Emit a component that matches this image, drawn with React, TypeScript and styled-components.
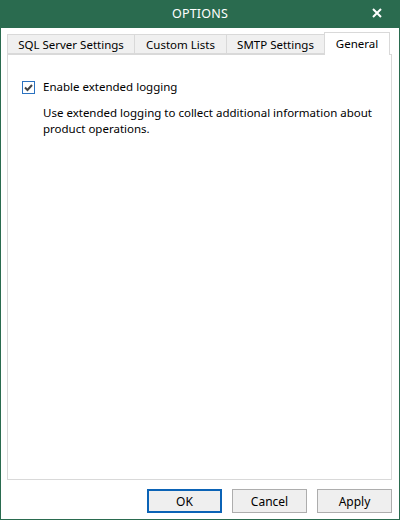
import React from "react";
import styled, { createGlobalStyle } from "styled-components";

const GREEN = "#2a6b4f";

const GlobalStyle = createGlobalStyle`
  html, body {
    margin: 0;
    padding: 0;
    background: #ffffff;
  }
  body {
    font-family: "Noto Sans", "Open Sans", "Liberation Sans", sans-serif;
    font-size: 11px;
    color: #1a1a1a;
  }
  * {
    box-sizing: border-box;
  }
`;

// tab label + width in px, as the tabs are drawn in the dialog
const tabs = [
  { label: "SQL Server Settings", width: 128 },
  { label: "Custom Lists", width: 93 },
  { label: "SMTP Settings", width: 99 },
  { label: "General", width: 66 },
];

export default function App(): JSX.Element {
  const active = 3;
  return (
    <>
      <GlobalStyle />
      <Window>
        <TitleBar>
          <span />
          <Title>OPTIONS</Title>
          <CloseButton aria-label="close">
            <svg width="10" height="10" viewBox="0 0 10 10">
              <path d="M1 1 L9 9 M9 1 L1 9" stroke="#fff" strokeWidth="2" />
            </svg>
          </CloseButton>
        </TitleBar>
        <Body>
          <TabStrip>
            {tabs.map((t, i) => (
              <Tab key={t.label} $active={i === active} $width={t.width}>
                {t.label}
              </Tab>
            ))}
          </TabStrip>
          <Panel>
            <CheckRow>
              <CheckBox>
                <svg width="11" height="11" viewBox="0 0 11 11">
                  <path
                    d="M2 5.5 L4.5 8 L9 3"
                    fill="none"
                    stroke="#444"
                    strokeWidth="2"
                  />
                </svg>
              </CheckBox>
              <span>Enable extended logging</span>
            </CheckRow>
            <Description>
              Use extended logging to collect additional information about
              product operations.
            </Description>
          </Panel>
          <Footer>
            <Button $primary>OK</Button>
            <Button>Cancel</Button>
            <Button>Apply</Button>
          </Footer>
        </Body>
      </Window>
    </>
  );
}

const Window = styled.div`
  width: 400px;
  height: 520px;
  display: flex;
  flex-direction: column;
  border: 1px solid ${GREEN};
  border-top: none;
  background: #fff;
`;

const TitleBar = styled.div`
  height: 28px;
  margin: 0 -1px;
  background: ${GREEN};
  color: #fff;
  display: grid;
  grid-template-columns: 1fr auto 1fr;
  align-items: center;
`;

const Title = styled.div`
  font-size: 12.5px;
  letter-spacing: 0.2px;
  line-height: 28px;
`;

const CloseButton = styled.div`
  justify-self: end;
  display: flex;
  align-items: center;
  padding-right: 18px;
  padding-bottom: 2px;
`;

const Body = styled.div`
  flex: 1;
  display: flex;
  flex-direction: column;
  padding: 4px 7px 6px 6px;
`;

const TabStrip = styled.div`
  display: flex;
  align-items: flex-end;
  height: 22px;
  position: relative;
  z-index: 1;
`;

const Tab = styled.div<{ $active?: boolean; $width: number }>`
  width: ${(p) => p.$width}px;
  height: ${(p) => (p.$active ? "23px" : "20px")};
  margin-bottom: ${(p) => (p.$active ? "-1px" : "0")};
  padding-top: ${(p) => (p.$active ? "0" : "0")};
  padding-bottom: ${(p) => (p.$active ? "2px" : "0")};
  display: flex;
  align-items: center;
  justify-content: center;
  background: ${(p) => (p.$active ? "#fff" : "#f0f0f0")};
  border: 1px solid #d9d9d9;
  border-bottom: ${(p) => (p.$active ? "none" : "1px solid #d9d9d9")};
  margin-left: -1px;
  white-space: nowrap;
  color: #000;
  font-size: 11.5px;

  &:first-child {
    margin-left: 0;
  }
`;

const Panel = styled.div`
  flex: 1;
  border: 1px solid #d9d9d9;
  padding: 24px 14px 0;
`;

const CheckRow = styled.div`
  display: flex;
  align-items: center;
  gap: 8px;
  line-height: 16px;
  color: #000;
  font-size: 11.5px;
`;

const CheckBox = styled.div`
  width: 13px;
  height: 13px;
  border: 1px solid #2b72c0;
  display: flex;
  align-items: center;
  justify-content: center;
  background: #fff;
`;

const Description = styled.div`
  margin: 10px 0 0 21px;
  line-height: 16px;
  color: #000;
  font-size: 11.5px;
`;

const Footer = styled.div`
  display: flex;
  justify-content: flex-end;
  gap: 10px;
  padding-top: 9px;
`;

const Button = styled.div<{ $primary?: boolean }>`
  width: 75px;
  height: 24px;
  display: flex;
  align-items: center;
  justify-content: center;
  background: #efefef;
  border: ${(p) => (p.$primary ? "2px solid #0b63b6" : "1px solid #adadad")};
  color: #000;
  font-size: 12px;
`;
